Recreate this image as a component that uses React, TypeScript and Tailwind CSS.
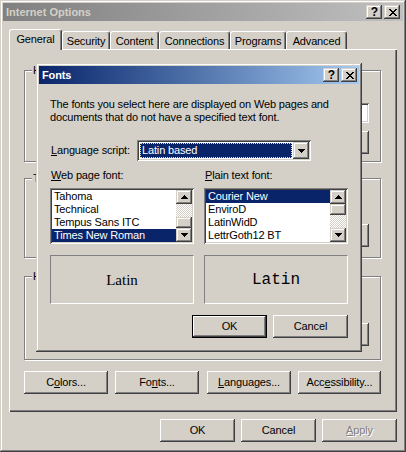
import React from "react";

const FONT = "font-['Liberation_Sans',Arial,sans-serif]";
const WIN =
  "shadow-[inset_-1px_-1px_#404040,inset_1px_1px_#d4d0c8,inset_-2px_-2px_#808080,inset_2px_2px_#ffffff]";
const RAISED =
  "shadow-[inset_-1px_-1px_#404040,inset_1px_1px_#ffffff,inset_-2px_-2px_#808080]";
const SUNK =
  "shadow-[inset_1px_1px_#808080,inset_-1px_-1px_#ffffff,inset_2px_2px_#404040,inset_-2px_-2px_#d4d0c8]";
const PANEL =
  "shadow-[inset_1px_1px_#ffffff,inset_-1px_-1px_#404040,inset_-2px_-2px_#808080]";
const CHECK =
  "bg-[conic-gradient(#ffffff_25%,#d4d0c8_0_50%,#ffffff_0_75%,#d4d0c8_0)] bg-[length:2px_2px]";

function Btn({
  children,
  className = "",
  def = false,
  disabled = false,
}: {
  children?: React.ReactNode;
  className?: string;
  def?: boolean;
  disabled?: boolean;
}) {
  return (
    <div
      className={`h-[23px] shrink-0 bg-[#d4d0c8] flex items-center justify-center ${
        def ? "border border-black" : ""
      } ${RAISED} ${
        disabled ? "text-[#808080] [text-shadow:1px_1px_0_#ffffff]" : ""
      } ${className}`}
    >
      {children}
    </div>
  );
}

function CloseGlyph() {
  return (
    <svg width="8" height="7" viewBox="0 0 8 7" shapeRendering="crispEdges">
      <path
        d="M0 0h2v1H0zM6 0h2v1H6zM1 1h2v1H1zM5 1h2v1H5zM2 2h4v1H2zM3 3h2v1H3zM2 4h4v1H2zM1 5h2v1H1zM5 5h2v1H5zM0 6h2v1H0zM6 6h2v1H6z"
        fill="#000"
      />
    </svg>
  );
}

function TitleButtons() {
  return (
    <div className="ml-auto flex gap-[2px]">
      <div
        className={`w-[16px] h-[14px] bg-[#d4d0c8] ${WIN} flex items-center justify-center`}
      >
        <span className="font-bold text-[12px] leading-none text-black pl-[1px] tracking-normal">
          ?
        </span>
      </div>
      <div
        className={`w-[16px] h-[14px] bg-[#d4d0c8] ${WIN} flex items-center justify-center pl-[1px]`}
      >
        <CloseGlyph />
      </div>
    </div>
  );
}

function Arrow({ up }: { up: boolean }) {
  return (
    <svg width="7" height="4" viewBox="0 0 7 4" shapeRendering="crispEdges">
      <path
        d={
          up
            ? "M3 0h1v1H3zM2 1h3v1H2zM1 2h5v1H1zM0 3h7v1H0z"
            : "M0 0h7v1H0zM1 1h5v1H1zM2 2h3v1H2zM3 3h1v1H3z"
        }
        fill="#000"
      />
    </svg>
  );
}

function ScrollBar({ thumbFirst }: { thumbFirst: boolean }) {
  const thumb = <div className={`h-[11px] bg-[#d4d0c8] ${WIN}`} />;
  const track = <div className={`h-[13px] ${CHECK}`} />;
  return (
    <div className="w-[16px] flex flex-col">
      <div className={`h-[14px] bg-[#d4d0c8] ${WIN} flex items-center justify-center`}>
        <Arrow up />
      </div>
      {thumbFirst ? (
        <>
          {thumb}
          {track}
        </>
      ) : (
        <>
          {track}
          {thumb}
        </>
      )}
      <div className={`h-[14px] bg-[#d4d0c8] ${WIN} flex items-center justify-center`}>
        <Arrow up={false} />
      </div>
    </div>
  );
}

function ListBox({
  items,
  sel,
  thumbFirst,
}: {
  items: string[];
  sel: number;
  thumbFirst: boolean;
}) {
  return (
    <div className={`w-[144px] h-[56px] bg-white ${SUNK} p-[2px] flex`}>
      <div className="flex-1 flex flex-col overflow-hidden">
        {items.map((it, i) => (
          <div
            key={it}
            className={`h-[13px] leading-[13px] pl-[2px] whitespace-nowrap ${
              i === sel ? "bg-[#0a246a] text-white" : "text-black"
            }`}
          >
            {it}
          </div>
        ))}
      </div>
      <ScrollBar thumbFirst={thumbFirst} />
    </div>
  );
}

function Group({
  label,
  className = "",
  children,
}: {
  label: string;
  className?: string;
  children?: React.ReactNode;
}) {
  return (
    <div
      className={`relative w-[357px] border border-[#808080] shadow-[1px_1px_0_#ffffff,inset_1px_1px_0_#ffffff] ${className}`}
    >
      <span className="absolute left-[7px] -top-[7px] bg-[#d4d0c8] px-[1px] leading-[13px]">
        {label}
      </span>
      {children}
    </div>
  );
}

function Tab({ label, w, sel = false }: { label: string; w: string; sel?: boolean }) {
  return (
    <div
      className={`${w} ${
        sel ? "h-[21px] -mb-px pb-[2px]" : "h-[18px] pt-[1px]"
      } bg-[#d4d0c8] border-l border-t border-white border-r border-r-[#404040] rounded-t-[3px] shadow-[inset_-1px_0_#808080] flex items-center justify-center whitespace-nowrap`}
    >
      {label}
    </div>
  );
}

function FontsDialog() {
  return (
    <div
      className={`absolute left-[36px] top-[63px] w-[326px] h-[289px] bg-[#d4d0c8] p-[3px] ${WIN} flex flex-col`}
    >
      <div className="h-[18px] shrink-0 bg-gradient-to-r from-[#0a246a] to-[#a6caf0] flex items-center pl-[3px] pr-[2px]">
        <span className="font-bold text-white">Fonts</span>
        <TitleButtons />
      </div>
      <div className="px-[11px] flex flex-col">
        <p className="pt-[14px] leading-[13px] whitespace-nowrap">
          The fonts you select here are displayed on Web pages and
          <br />
          documents that do not have a specified text font.
        </p>
        <div className="mt-[16px] h-[21px] flex items-center">
          <span className="w-[87px] shrink-0 pl-[1px]">
            <u>L</u>anguage script:
          </span>
          <div className={`w-[174px] h-[21px] bg-white ${SUNK} p-[2px] flex`}>
            <div className="flex-1 p-[1px]">
              <div className="h-full bg-[#0a246a] border border-dotted border-[#e8e0a8] text-white flex items-center pl-[1px]">
                Latin based
              </div>
            </div>
            <div className={`w-[16px] bg-[#d4d0c8] ${WIN} flex items-center justify-center`}>
              <Arrow up={false} />
            </div>
          </div>
        </div>
        <div className="mt-[8px] flex gap-[10px] leading-[13px]">
          <span className="w-[144px] pl-[1px]">
            <u>W</u>eb page font:
          </span>
          <span className="w-[144px] pl-[1px]">
            <u>P</u>lain text font:
          </span>
        </div>
        <div className="mt-[6px] flex gap-[10px]">
          <ListBox
            items={["Tahoma", "Technical", "Tempus Sans ITC", "Times New Roman"]}
            sel={3}
            thumbFirst={false}
          />
          <ListBox
            items={["Courier New", "EnviroD", "LatinWidD", "LettrGoth12 BT"]}
            sel={0}
            thumbFirst={true}
          />
        </div>
        <div className="mt-[11px] flex gap-[10px]">
          <div className="w-[144px] h-[49px] border border-t-[#808080] border-l-[#808080] border-b-white border-r-white flex items-center justify-center pt-[2px] font-['Liberation_Serif',serif] text-[15px] tracking-normal">
            Latin
          </div>
          <div className="w-[144px] h-[49px] border border-t-[#808080] border-l-[#808080] border-b-white border-r-white flex items-center justify-center pt-[2px] font-['Liberation_Mono',monospace] text-[16px] tracking-normal">
            Latin
          </div>
        </div>
        <div className="mt-[11px] flex justify-end gap-[6px]">
          <Btn def className="w-[75px]">
            OK
          </Btn>
          <Btn className="w-[75px]">Cancel</Btn>
        </div>
      </div>
    </div>
  );
}

export default function App() {
  return (
    <div
      className={`relative w-[406px] h-[452px] bg-[#d4d0c8] p-[3px] ${WIN} ${FONT} text-[11px] leading-[13px] tracking-[-0.15px] text-black select-none overflow-hidden`}
    >
      <div className="flex flex-col">
        <div className="h-[18px] bg-gradient-to-r from-[#808080] to-[#c0c0c0] flex items-center pl-[3px] pr-[3px]">
          <span className="font-bold text-[#d4d0c8] tracking-normal">Internet Options</span>
          <TitleButtons />
        </div>

        <div className="relative z-10 mt-[8px] ml-[6px] h-[20px] flex items-end">
          <Tab label="General" w="w-[53px]" sel />
          <Tab label="Security" w="w-[48px]" />
          <Tab label="Content" w="w-[49px]" />
          <Tab label="Connections" w="w-[71px]" />
          <Tab label="Programs" w="w-[56px]" />
          <Tab label="Advanced" w="w-[61px]" />
        </div>

        <div className={`ml-[6px] w-[388px] h-[363px] ${PANEL} pl-[15px] pt-[21px] flex flex-col`}>
          <Group label="Home page" className="h-[92px] pt-[12px] pr-[11px] pl-[11px]">
            <div className="flex">
              <div className="w-[32px] h-[32px] shrink-0" />
              <div className="ml-[8px] flex-1 flex flex-col">
                <div className="h-[13px]" />
                <div className="mt-[7px] flex items-center">
                  <div className="w-[46px] shrink-0" />
                  <div className={`flex-1 h-[20px] bg-white ${SUNK}`} />
                </div>
                <div className="mt-[8px] flex justify-end gap-[6px]">
                  <Btn className="w-[75px]" />
                  <Btn className="w-[75px]" />
                  <Btn className="w-[75px]" />
                </div>
              </div>
            </div>
          </Group>

          <Group
            label="Temporary Internet files"
            className="mt-[16px] h-[80px] pt-[12px] pr-[11px] pl-[11px]"
          >
            <div className="flex">
              <div className="w-[32px] h-[32px] shrink-0" />
              <div className="ml-[8px] flex-1 flex flex-col">
                <div className="h-[26px]" />
                <div className="mt-[7px] flex justify-end gap-[6px]">
                  <Btn className="w-[75px]" />
                  <Btn className="w-[75px]" />
                </div>
              </div>
            </div>
          </Group>

          <Group label="History" className="mt-[18px] h-[84px] pt-[12px] pr-[11px] pl-[11px]">
            <div className="flex">
              <div className="w-[32px] h-[32px] shrink-0" />
              <div className="ml-[8px] flex-1 flex flex-col">
                <div className="h-[26px]" />
                <div className="mt-[8px] flex items-center">
                  <div className={`ml-[160px] w-[40px] h-[20px] bg-white ${SUNK}`} />
                  <div className="flex-1" />
                  <Btn className="w-[75px]" />
                </div>
              </div>
            </div>
          </Group>

          <div className="mt-[11px] flex">
            <Btn className="w-[84px]">
              C<u>o</u>lors...
            </Btn>
            <Btn className="ml-[7px] w-[84px]">
              Fo<u>n</u>ts...
            </Btn>
            <Btn className="ml-[8px] w-[84px]">
              <u>L</u>anguages...
            </Btn>
            <Btn className="ml-[7px] w-[83px]">
              Acc<u>e</u>ssibility...
            </Btn>
          </div>
        </div>

        <div className="ml-[6px] w-[388px] mt-[7px] flex justify-end gap-[6px]">
          <Btn className="w-[75px]">OK</Btn>
          <Btn className="w-[75px]">Cancel</Btn>
          <Btn className="w-[75px]" disabled>
            <u>A</u>pply
          </Btn>
        </div>
      </div>

      <FontsDialog />
    </div>
  );
}
